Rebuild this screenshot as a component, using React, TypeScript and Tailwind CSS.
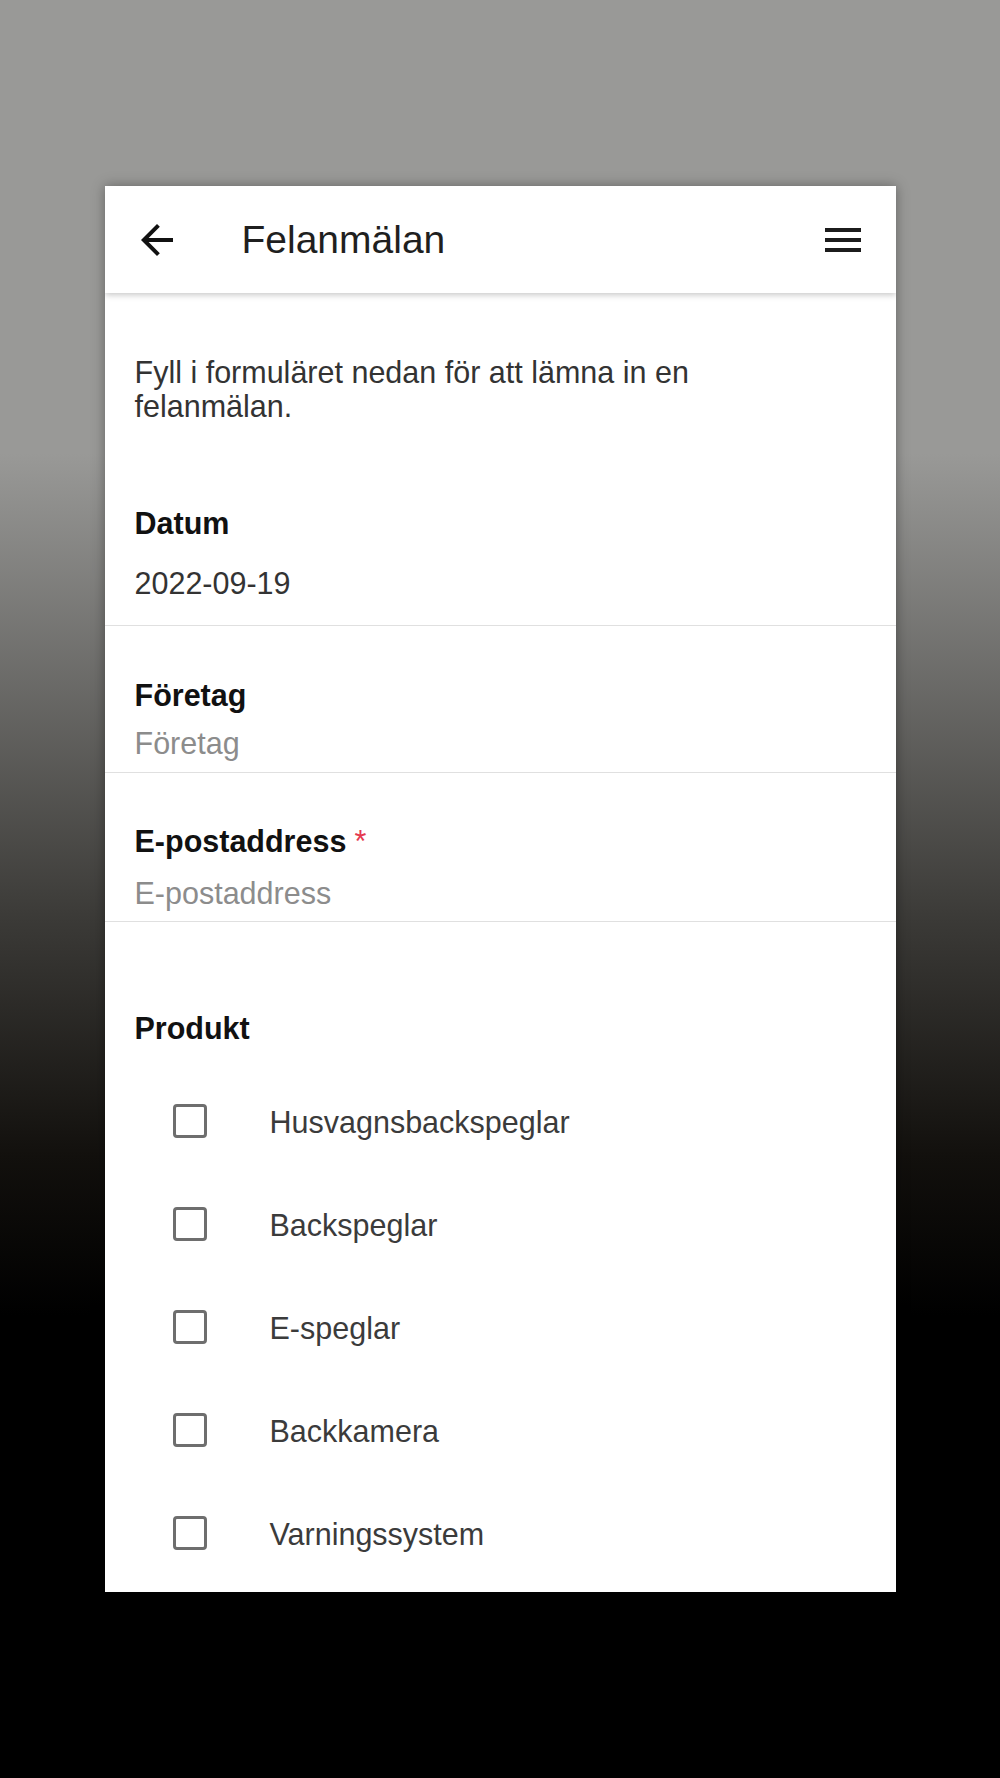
const products = [
  "Husvagnsbackspeglar",
  "Backspeglar",
  "E-speglar",
  "Backkamera",
  "Varningssystem",
];

const font = { fontFamily: '"Liberation Sans", Arial, sans-serif' };

const ArrowBack = () => (
  <svg width="48" height="48" viewBox="0 0 24 24" fill="#111">
    <path d="M20 11H7.83l5.59-5.59L12 4l-8 8 8 8 1.41-1.41L7.83 13H20v-2z" />
  </svg>
);

const MenuIcon = () => (
  <svg width="48" height="48" viewBox="0 0 24 24" fill="#1c1c1c">
    <path d="M3 18h18v-2H3v2zm0-5h18v-2H3v2zm0-7v2h18V6H3z" />
  </svg>
);

export default function App() {
  return (
    <div
      className="min-h-[1778px] w-full pt-[186px] bg-[linear-gradient(to_bottom,#999997_0%,#999997_25.5%,#3a3936_52%,#12100d_65%,#000_74%,#000_100%)]"
      style={font}
    >
      <div className="mx-auto w-[791px] h-[1406px] bg-white overflow-hidden shadow-[0_0_12px_rgba(0,0,0,0.35)]">
        <header className="relative z-10 h-[107px] flex items-center pl-[28px] pr-[29px] bg-white shadow-[0_2px_6px_rgba(0,0,0,0.22)]">
          <ArrowBack />
          <h1 className="ml-[61px] text-[39px] leading-none text-[#1f1f1f]">
            Felanmälan
          </h1>
          <div className="ml-auto">
            <MenuIcon />
          </div>
        </header>

        <p className="px-[30px] pt-[62px] max-w-[690px] text-[30.5px] leading-[34px] text-[#333]">
          Fyll i formuläret nedan för att lämna in en felanmälan.
        </p>

        <div className="px-[30px] pt-[83px] pb-[25px] border-b border-[#e0e0e0]">
          <div className="text-[30.5px] leading-[34px] font-bold text-[#111]">
            Datum
          </div>
          <div className="mt-[26px] text-[30.5px] leading-[34px] text-[#333]">
            2022-09-19
          </div>
        </div>

        <div className="px-[30px] pt-[52px] pb-[12px] border-b border-[#e0e0e0]">
          <div className="text-[30.5px] leading-[34px] font-bold text-[#111]">
            Företag
          </div>
          <div className="mt-[14px] text-[30.5px] leading-[34px] text-[#8c8c8c]">
            Företag
          </div>
        </div>

        <div className="px-[30px] pt-[51px] pb-[11px] border-b border-[#e0e0e0]">
          <div className="text-[30.5px] leading-[34px] font-bold text-[#111]">
            E-postaddress
            <span className="ml-[8px] font-normal text-[#e53950]">*</span>
          </div>
          <div className="mt-[18px] text-[30.5px] leading-[34px] text-[#8c8c8c]">
            E-postaddress
          </div>
        </div>

        <div className="px-[30px] pt-[89px]">
          <div className="text-[30.5px] leading-[34px] font-bold text-[#111]">
            Produkt
          </div>
          <ul className="mt-[24px]">
            {products.map((p) => (
              <li key={p} className="h-[103px] flex items-center pl-[38px]">
                <span className="w-[34px] h-[34px] rounded-[4px] border-[3px] border-[#6e6e6e]" />
                <span className="ml-[63px] pt-[3px] text-[30.5px] leading-[34px] text-[#3b3b3b]">
                  {p}
                </span>
              </li>
            ))}
          </ul>
        </div>
      </div>
    </div>
  );
}
